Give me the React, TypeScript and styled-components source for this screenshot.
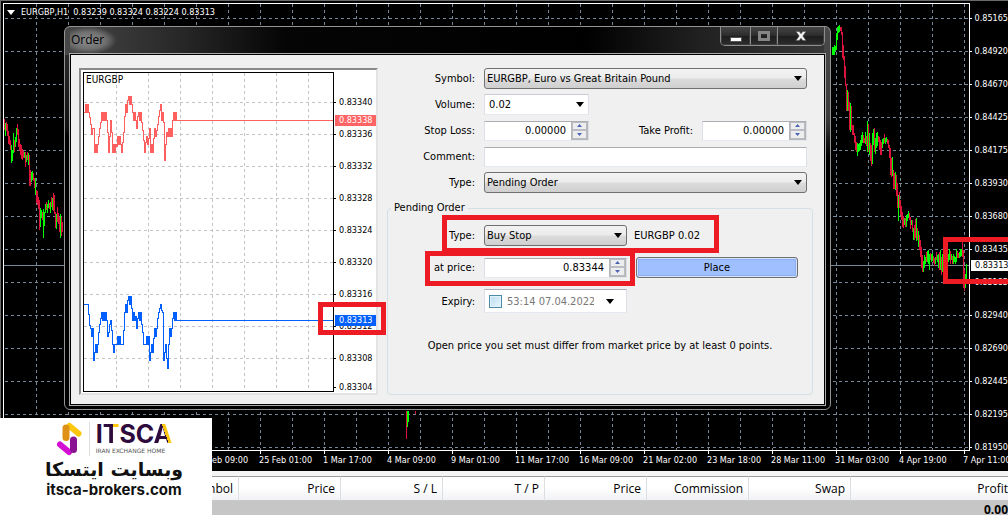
import React from "react";
import styled, { createGlobalStyle } from "styled-components";

const Global = createGlobalStyle`
  * { box-sizing: border-box; }
  html, body { margin: 0; padding: 0; background: #000; }
  body, input, select, button {
    font-family: "DejaVu Sans Condensed", "DejaVu Sans", sans-serif;
    font-stretch: condensed;
    font-size: 11px;
  }
`;

/* ---------- desktop and main chart ---------- */

const Desktop = styled.div`
  position: relative;
  display: flex;
  flex-direction: column;
  height: 100vh;
  overflow: hidden;
  background: #000;
`;

const ChartWindow = styled.section`
  flex: 1;
  min-height: 0;
  display: flex;
  flex-direction: column;
  padding: 2px 0 0 2px;
  border-top: 1px solid #6b6b6b;
  border-left: 1px solid #6b6b6b;
  color: #fff;
  font-size: 9px;
  line-height: 12px;
`;

const PlotRow = styled.div`
  flex: 1;
  min-height: 0;
  display: flex;
`;

const Plot = styled.div`
  flex: 1;
  min-width: 0;
  display: grid;
  border: 1px solid #fff;
  & > * { grid-area: 1 / 1; }
`;

const Drawing = styled.svg`
  display: block;
  width: 100%;
  height: 100%;
  min-height: 0;
`;

const Quote = styled.div`
  display: flex;
  align-items: center;
  gap: 6px;
  height: 16px;
  padding-left: 3px;
  white-space: pre;
  z-index: 1;
`;

const PriceAxis = styled.div`
  position: relative;
  width: 38px;
  display: flex;
  flex-direction: column;
  gap: 21px;
  padding-top: 9px;
`;

const Price = styled.span`
  display: flex;
  align-items: center;
  gap: 3px;
  height: 12px;
  white-space: nowrap;
  &::before { content: ""; width: 2px; height: 1px; background: #fff; }
`;

const CurrentPrice = styled.span`
  position: absolute;
  top: 257px;
  left: 1px;
  right: 0;
  height: 11px;
  padding-left: 4px;
  line-height: 11px;
  color: #000;
  background: #fff;
`;

const TimeAxis = styled.div`
  display: flex;
  height: 20px;
  padding-left: 192px;
  overflow: hidden;
`;

const Time = styled.span`
  flex: 0 0 64px;
  padding-top: 3px;
  white-space: nowrap;
  background: linear-gradient(#fff, #fff) 1px 0 / 1px 3px no-repeat;
`;

const Callout = styled.i<{ $box: string; $h?: number }>`
  position: absolute;
  inset: ${(p) => p.$box};
  height: ${(p) => (p.$h ? `${p.$h}px` : "auto")};
  border: 5px solid #ed1c24;
  pointer-events: none;
  z-index: 2;
`;

/* ---------- trade table ---------- */

const Terminal = styled.div`
  padding-top: 5px;
  background: #f4f4f4;
  height: 44px;
  overflow: hidden;
`;

const Trades = styled.table`
  width: 100%;
  table-layout: fixed;
  border-collapse: separate;
  border-spacing: 0;
  font-family: "Open Sans", "Noto Sans", sans-serif;
  font-stretch: normal;
  font-size: 12px;
  color: #000;
  th {
    height: 25px;
    padding: 0 5px 0 0;
    border-top: 1px solid #9a9a9a;
    border-right: 1px solid #dcdfe2;
    border-bottom: 1px solid #c8c8c8;
    background: linear-gradient(#fff 45%, #f1f2f4);
    font-weight: 400;
    text-align: right;
  }
  th:last-child { padding-right: 0; border-right: 0; }
  td {
    height: 18px;
    padding: 0;
    background: #c6c6c6;
    font-weight: 700;
    line-height: 18px;
    text-align: right;
  }
`;

const Col = styled.col<{ $w?: number }>`
  width: ${(p) => (p.$w ? `${p.$w}px` : "auto")};
`;

/* ---------- watermark ---------- */

const Brand = styled.aside`
  position: absolute;
  left: 0;
  bottom: 0;
  width: 212px;
  height: 97px;
  padding: 4px 0 0 16px;
  display: flex;
  flex-direction: column;
  align-items: center;
  background: #fff;
  color: #111;
  z-index: 3;
`;

const BrandTop = styled.div`
  display: flex;
  align-items: flex-start;
  gap: 6px;
`;

const BrandRule = styled.span`
  width: 1px;
  height: 34px;
  background: #ddd;
`;

const BrandName = styled.div`
  font-family: Inter, sans-serif;
  font-stretch: normal;
  font-size: 25px;
  font-weight: 700;
  line-height: 25px;
  color: #2e0b3c;
`;

const TwoTone = styled.span<{ $fill: string }>`
  background: ${(p) => p.$fill};
  background-clip: text;
  color: transparent;
`;

const BrandTag = styled.div`
  font-family: "DejaVu Sans", sans-serif;
  font-stretch: normal;
  font-size: 6px;
  line-height: 8px;
  color: #555;
`;

const BrandFa = styled.div`
  font-family: "DejaVu Sans", sans-serif;
  font-stretch: normal;
  font-size: 19px;
  font-weight: 700;
  line-height: 26px;
`;

const BrandUrl = styled.div`
  font-family: Inter, sans-serif;
  font-stretch: normal;
  font-size: 15px;
  font-weight: 700;
  line-height: 16px;
`;

/* ---------- order dialog ---------- */

const Dialog = styled.section`
  position: absolute;
  top: 26px;
  left: 64px;
  right: 177px;
  padding: 0 5px 4px;
  border: 1px solid #949494;
  border-radius: 6px;
  background:
    linear-gradient(#4a4a4a, #3c3c3c 90px, transparent 130px) right / 6px 100% no-repeat,
    linear-gradient(90deg, #474747, #262626 120px, #050505 220px, #000 520px, #222 640px, #383838) top / 100% 28px no-repeat,
    linear-gradient(#333, #111 100px, #000 110px);
  color: #000;
  z-index: 1;
`;

const TitleBar = styled.header`
  display: flex;
  justify-content: space-between;
  height: 27px;
`;

const Title = styled.h1`
  margin: 0;
  padding: 0 12px 0 1px;
  font-family: "Open Sans", "Noto Sans", sans-serif;
  font-stretch: normal;
  font-size: 12px;
  font-weight: 400;
  line-height: 26px;
  background: radial-gradient(ellipse at 40% 50%, #8d8d8d, #6f6f6f 45%, transparent 72%);
`;

const WindowButtons = styled.div`
  display: flex;
  height: 19px;
  border: 1px solid #8d8d8d;
  border-top: 0;
  border-radius: 0 0 5px 5px;
  overflow: hidden;
`;

const WindowButton = styled.button<{ $w: number }>`
  width: ${(p) => p.$w}px;
  padding: 0;
  display: flex;
  align-items: center;
  justify-content: center;
  border: 1px solid #3c3c3c;
  border-top: 0;
  background: linear-gradient(#454545, #2c2c2c 50%, #1c1c1c 52%, #2b2b2b);
  & + & { border-left: 1px solid #8d8d8d; }
`;

const Client = styled.div`
  display: flex;
  gap: 9px;
  padding: 13px 11px 9px 8px;
  border: 1px solid #000;
  outline: 1px solid #a9a9a9;
  background: #f0f0f0;
`;

const TickPanel = styled.div`
  flex: none;
  display: flex;
  padding: 2px 0 1px 2px;
  border: 2px solid;
  border-color: #8a8a8a #e3e3e3 #e3e3e3 #8a8a8a;
  background: #fff;
  font-size: 9px;
  line-height: 12px;
`;

const TickPlot = styled.div`
  display: grid;
  width: 251px;
  height: 320px;
  border: 1px solid #000;
  & > * { grid-area: 1 / 1; }
`;

const TickSymbol = styled.span`
  height: 13px;
  padding: 0 2px;
  font-size: 10px;
  line-height: 13px;
  z-index: 1;
`;

const TickAxis = styled.div`
  position: relative;
  display: flex;
  flex-direction: column;
  gap: 20px;
  width: 42px;
  height: 320px;
  padding-top: 24px;
`;

const TickPrice = styled.span`
  display: flex;
  flex: none;
  align-items: center;
  gap: 3px;
  height: 12px;
  &::before { content: ""; width: 2px; height: 1px; background: #000; }
  &:nth-child(10) { margin-top: -3px; }
`;

const TickTag = styled.span<{ $top: number; $color: string }>`
  position: absolute;
  top: ${(p) => p.$top}px;
  left: 1px;
  width: 41px;
  height: 11px;
  padding-left: 4px;
  line-height: 11px;
  color: #fff;
  background: ${(p) => p.$color};
`;

const Form = styled.form`
  flex: 1;
  min-width: 0;
  display: flex;
  flex-direction: column;
`;

const Rows = styled.div`
  display: flex;
  flex-direction: column;
  gap: 5px;
  padding-right: 6px;
`;

const Row = styled.div`
  position: relative;
  display: flex;
  align-items: center;
  min-height: 21px;
`;

const Label = styled.label`
  flex: 0 0 88px;
  margin-right: 9px;
  text-align: right;
  white-space: nowrap;
`;

const SideLabel = styled.label`
  margin: 0 9px 0 auto;
  white-space: nowrap;
`;

const Picker = styled.span<{ $w?: number; $plain?: boolean }>`
  position: relative;
  display: flex;
  flex: ${(p) => (p.$w ? `0 0 ${p.$w}px` : "1")};
  min-width: 0;
  height: 21px;
  border: 1px solid;
  border-color: ${(p) => (p.$plain ? "#c9ccd2 #dbdfe6 #e3e9ef #dbdfe6" : "#707070")};
  border-radius: ${(p) => (p.$plain ? "1px" : "3px")};
  background: ${(p) => (p.$plain ? "#fff" : "linear-gradient(#f3f3f3, #ebebeb 49%, #dcdcdc 51%, #cfcfcf)")};
  select {
    flex: 1;
    min-width: 0;
    appearance: none;
    border: 0;
    padding: 0 18px 0 ${(p) => (p.$plain ? "4px" : "2px")};
    background: transparent;
    color: #000;
  }
`;

const Arrow = styled.i`
  align-self: center;
  position: absolute;
  right: 4px;
  border: 4px solid transparent;
  border-top: 5px solid #000;
  border-bottom: 0;
  pointer-events: none;
`;

const Field = styled.span<{ $w?: number }>`
  display: flex;
  flex: ${(p) => (p.$w ? `0 0 ${p.$w}px` : "1")};
  min-width: 0;
  height: 20px;
  border: 1px solid;
  border-color: #abadb3 #dbdfe6 #e3e9ef #dbdfe6;
  border-radius: 1px;
  background: #fff;
  input {
    flex: 1;
    min-width: 0;
    border: 0;
    padding: 0 5px 0 4px;
    background: transparent;
    color: #000;
    text-align: right;
  }
`;

const Stepper = styled.span`
  display: flex;
  flex: 0 0 17px;
  flex-direction: column;
  border: 1px solid #b5b5b5;
  border-top: 0;
  background: #fff;
`;

const Step = styled.button`
  flex: 1;
  display: flex;
  align-items: center;
  justify-content: center;
  padding: 0;
  border: 1px solid #b9bcc4;
  background: #ededed;
`;

const Group = styled.fieldset`
  flex: 1;
  min-width: 0;
  margin: 8px 0 0;
  padding: 10px 0 0;
  border: 1px solid #d5dfe5;
  border-radius: 4px;
  legend {
    margin-left: 3px;
    padding: 0 3px;
    line-height: 14px;
  }
`;

const GroupRows = styled.div`
  display: flex;
  flex-direction: column;
  gap: 11px;
  margin-left: -1px;
`;

const Summary = styled.span`
  margin-left: 7px;
`;

const PlaceButton = styled.button`
  flex: 1;
  height: 21px;
  margin: 0 14px 0 9px;
  padding: 0;
  border: 1px solid #707070;
  border-radius: 3px;
  background: #a0bfff;
  box-shadow: inset 0 0 0 1px #d5e2ff, inset 0 0 0 2px #8caef2;
  color: #000;
`;

const DateField = styled(Field)`
  position: relative;
  align-items: center;
  height: 24px;
  padding-left: 4px;
  input[type="text"] {
    flex: 0 0 92px;
    padding: 0 0 0 5px;
    color: #787878;
    text-align: left;
  }
`;

const Check = styled.input`
  && {
    appearance: none;
    flex: 0 0 13px;
    height: 13px;
    margin: 0;
    padding: 0;
    border: 1px solid #4d8aa8;
    background: linear-gradient(135deg, #b9dcf2, #e9f6fd);
    box-shadow: inset 0 0 0 1px #e4f3fb;
  }
`;

const DateArrow = styled(Arrow)`
  right: 12px;
`;

const Note = styled.p`
  margin: 25px 0 0;
  line-height: 16px;
  text-align: center;
`;

/* ---------- data ---------- */

const prices = ["0.85165", "0.84920", "0.84670", "0.84425", "0.84175", "0.83930", "0.83680", "0.83435", "0.83185", "0.82940", "0.82690", "0.82445", "0.82195", "0.81950"];
const times = ["22 Feb 09:00", "25 Feb 01:00", "1 Mar 17:00", "4 Mar 09:00", "9 Mar 01:00", "11 Mar 17:00", "16 Mar 09:00", "21 Mar 02:00", "23 Mar 18:00", "28 Mar 11:00", "31 Mar 03:00", "4 Apr 19:00", "7 Apr 11:00"];
const tickPrices = ["0.83340", "0.83336", "0.83332", "0.83328", "0.83324", "0.83320", "0.83316", "0.83312", "0.83308", "0.83304"];

/* One bar per entry: direction, x, high, low. */
const bars = `r4 119 130,g5 123 136,r6 122 131,r7 124 136,r8 131 144,r9 136 145,r10 140 150,g11 145 163,g12 150 161,g13 133 153,r14 140 152,g15 137 147,g16 128 142,r17 124 135,r18 129 147,r19 139 151,r20 144 155,r21 145 159,r22 149 160,r23 151 158,g24 152 158,r25 152 167,g26 155 162,r27 152 160,g28 153 165,r29 155 186,r30 170 186,g31 172 182,g32 171 180,r33 173 181,r34 178 188,g35 178 195,r36 190 203,r37 191 205,r38 197 209,r39 200 230,g40 208 227,g41 210 218,r42 212 220,g43 209 238,g44 212 226,g45 204 213,r46 202 210,g47 204 213,g48 200 208,r49 203 209,g50 202 213,r51 197 207,g52 198 210,r53 193 211,r54 195 214,r55 212 228,g56 214 229,r57 207 222,r58 213 224,r59 217 232,g60 214 238,r61 217 236,r62 222 232,
g832 47 55,g833 47 55,g834 45 55,g835 46 51,g836 33 50,g837 27 40,g838 26 33,g839 25 32,r840 27 31,r841 27 35,r842 32 58,r843 45 60,r844 56 78,r845 66 86,r846 84 111,g847 90 111,r848 92 111,r849 102 130,g850 103 132,r851 106 130,r852 125 135,r853 125 135,r854 133 143,r855 136 150,r856 142 152,g857 143 156,g858 144 152,g859 143 151,g860 140 150,g861 135 146,g862 132 143,r863 135 143,r864 138 143,g865 132 144,r866 136 146,g867 121 152,r868 124 152,g869 133 155,r870 143 161,r871 145 166,g872 133 164,g873 129 145,r874 128 152,g875 138 154,g876 133 148,g877 132 146,r878 136 142,r879 137 150,r880 140 155,r881 142 155,g882 139 148,g883 138 144,r884 134 143,g885 138 144,g886 137 142,r887 139 144,r888 140 148,r889 145 158,r890 148 175,r891 158 177,g892 157 176,r893 170 189,r894 173 189,g895 172 190,r896 175 196,r897 183 208,g898 195 221,r899 192 208,r900 200 215,r901 206 220,r902 212 227,r903 216 228,g904 218 225,r905 218 227,g906 215 227,g907 214 221,g908 211 218,r909 213 220,r910 217 229,g911 220 225,r912 220 232,g913 228 240,r914 225 240,r915 219 238,g916 218 241,r917 228 240,g918 231 247,r919 235 250,r920 240 257,r921 247 268,r922 255 272,g923 261 272,g924 255 268,g925 257 264,r926 252 262,g927 251 262,g928 250 264,g929 254 270,r930 253 260,g931 254 262,g932 253 261,r933 256 263,r934 258 266,g935 257 264,r936 252 260,g937 255 262,g938 254 268,r939 252 270,g940 250 270,r941 257 275,g942 254 272,g943 250 268,r944 251 262,g945 252 264,g946 255 262,r947 252 260,g948 254 262,g949 249 260,r950 251 264,g951 254 260,r952 256 264,g953 254 264,g954 256 262,g955 257 264,g956 249 262,r957 251 258,r958 253 258,g959 252 258,g960 249 257,g961 249 256,r962 241 257,r963 250 288,r964 270 291,g965 274 288,g966 264 280,
r406 411 439,g407 411 427,g408 411 422,r415 411 414`
  .split(",")
  .map((s) => {
    const t = s.trim();
    const [x, y1, y2] = t.slice(1).split(" ").map(Number);
    return { up: t[0] === "g", x, y1, y2 };
  });

const ask = "84,112 85,104 86,112 87,104 88,112 89,117 90,124 91,134 92,128 93,128 94,140 94,152 95,144 96,152 97,144 98,136 99,128 100,122 101,112 102,120 103,112 104,120 105,112 106,120 107,132 108,152 109,136 110,120 111,132 112,152 113,144 114,152 115,144 116,146 117,136 118,144 119,136 120,144 121,152 122,142 123,132 124,116 125,104 126,112 127,100 128,96 129,104 130,96 131,104 132,112 133,120 134,112 135,120 136,128 137,116 138,112 139,120 140,112 141,122 142,130 143,140 144,152 145,142 146,136 147,144 148,138 149,128 150,152 151,144 152,152 153,138 154,128 155,136 156,130 157,124 158,116 159,110 160,104 161,120 162,112 163,122 164,160 165,144 166,132 167,136 168,128 169,136 170,128 171,136 172,120 173,112 174,120 175,112 176,120";
const bid = "84,304 87,304 88,314 89,325 90,328 91,336 92,328 93,360 94,352 95,344 96,352 97,344 98,332 99,324 100,318 101,312 102,320 103,312 104,320 105,312 106,320 107,336 108,332 109,324 110,320 111,330 112,344 113,352 114,344 116,344 117,336 118,344 119,336 120,344 122,344 123,330 124,312 125,304 126,312 127,300 128,296 129,304 130,296 131,308 132,320 133,312 134,320 135,316 136,328 137,318 138,312 139,320 140,312 141,324 142,332 143,344 145,344 146,336 147,344 148,336 149,360 150,352 151,344 152,352 153,338 154,328 155,336 156,328 157,318 158,312 159,308 160,304 161,310 162,312 163,360 164,352 165,344 166,358 167,368 168,344 169,328 170,336 171,328 172,318 173,312 174,320 175,312 176,320";

/* Turns a list of points into a stepped path of one-pixel moves. */
const stepped = (points: string) =>
  points
    .split(" ")
    .map((p, i) => {
      const [x, y] = p.split(",").map(Number);
      return i === 0 ? `M${x} ${y + 0.5}` : `H${x + 0.5}V${y + 0.5}`;
    })
    .join("");

const range = (from: number, step: number, count: number) => Array.from({ length: count }, (_, i) => from + i * step);

/* ---------- parts ---------- */

function MainPlot() {
  return (
    <Drawing shapeRendering="crispEdges" aria-hidden="true">
      <g transform="translate(-4 -4)">
        <g stroke="#778899" strokeDasharray="3 3">
          {range(36, 32, 80).map((x) => (
            <line key={x} x1={x + 0.5} x2={x + 0.5} y1="4" y2="2000" />
          ))}
          {range(18, 33, 40).map((y) => (
            <line key={y} y1={y + 0.5} y2={y + 0.5} x1="5" x2="3000" />
          ))}
        </g>
        <line x1="4" x2="3000" y1="265.5" y2="265.5" stroke="#778899" />
        {bars.map((b, i) => (
          <rect key={i} x={b.x} y={b.y1} width="1" height={b.y2 - b.y1} fill={b.up ? "#00ff00" : "#dc143c"} />
        ))}
      </g>
    </Drawing>
  );
}

function TickLines() {
  return (
    <Drawing shapeRendering="crispEdges" aria-hidden="true">
      <g transform="translate(-84 -73)" fill="none">
        <g stroke="#c4c4c4" strokeDasharray="3 3">
          {range(116, 32, 7).map((x) => (
            <line key={x} x1={x + 0.5} x2={x + 0.5} y1="73" y2="392" />
          ))}
          {range(102, 32, 9).map((y) => (
            <line key={y} y1={y + 0.5} y2={y + 0.5} x1="84" x2="334" />
          ))}
        </g>
        <path d={stepped(ask)} stroke="#ff5f5f" />
        <path d={stepped(bid)} stroke="#0060ff" />
        <rect x="176" y="120" width="158" height="1" fill="#ff5f5f" />
        <rect x="176" y="320" width="158" height="1" fill="#0060ff" />
      </g>
    </Drawing>
  );
}

function Spinner({ id, value, width }: { id: string; value: string; width: number }) {
  return (
    <Field $w={width}>
      <input id={id} defaultValue={value} />
      <Stepper>
        <Step type="button" aria-label="Increase">
          <svg width="5" height="3"><path d="M0 3 2.5 0 5 3z" fill="#4a62b5" /></svg>
        </Step>
        <Step type="button" aria-label="Decrease">
          <svg width="5" height="3"><path d="M0 0 2.5 3 5 0z" fill="#4a62b5" /></svg>
        </Step>
      </Stepper>
    </Field>
  );
}

function Dropdown({ id, value, width, plain }: { id: string; value: string; width?: number; plain?: boolean }) {
  return (
    <Picker $w={width} $plain={plain}>
      <select id={id}><option>{value}</option></select>
      <Arrow />
    </Picker>
  );
}

function OrderDialog() {
  return (
    <Dialog role="dialog" aria-label="Order">
      <TitleBar>
        <Title>Order</Title>
        <WindowButtons>
          <WindowButton $w={29} type="button" aria-label="Minimize">
            <svg width="12" height="12"><rect x=".5" y="7.5" width="11" height="4" fill="#fff" stroke="#555" /></svg>
          </WindowButton>
          <WindowButton $w={27} type="button" aria-label="Maximize" disabled>
            <svg width="12" height="10"><rect x="1.5" y="1.5" width="9" height="7" fill="none" stroke="#858585" strokeWidth="3" /><rect x="4" y="4" width="4" height="2" fill="#222" /></svg>
          </WindowButton>
          <WindowButton $w={47} type="button" aria-label="Close">
            <svg width="12" height="10" viewBox="0 0 12 10"><path d="M1 .5h3.2L6 2.8 7.8.5H11L7.8 5 11 9.5H7.8L6 7.2 4.2 9.5H1L4.2 5z" fill="#f4f4f4" stroke="#555" strokeWidth=".6" /></svg>
          </WindowButton>
        </WindowButtons>
      </TitleBar>
      <Client>
        <TickPanel>
          <TickPlot>
            <TickSymbol>EURGBP</TickSymbol>
            <TickLines />
          </TickPlot>
          <TickAxis>
            {tickPrices.map((p) => <TickPrice key={p}>{p}</TickPrice>)}
            <TickTag $top={43} $color="#ff6464">0.83338</TickTag>
            <TickTag $top={243} $color="#0060ff">0.83313</TickTag>
            <Callout $box="230px -10px auto -16px" $h={33} />
          </TickAxis>
        </TickPanel>
        <Form>
          <Rows>
            <Row><Label htmlFor="symbol">Symbol:</Label><Dropdown id="symbol" value="EURGBP, Euro vs Great Britain Pound" /></Row>
            <Row><Label htmlFor="volume">Volume:</Label><Dropdown id="volume" value="0.02" width={105} plain /></Row>
            <Row>
              <Label htmlFor="sl">Stop Loss:</Label>
              <Spinner id="sl" value="0.00000" width={105} />
              <SideLabel htmlFor="tp">Take Profit:</SideLabel>
              <Spinner id="tp" value="0.00000" width={105} />
            </Row>
            <Row><Label htmlFor="comment">Comment:</Label><Field><input id="comment" /></Field></Row>
            <Row><Label htmlFor="type">Type:</Label><Dropdown id="type" value="Pending Order" /></Row>
          </Rows>
          <Group>
            <legend>Pending Order</legend>
            <GroupRows>
              <Row>
                <Label htmlFor="pending">Type:</Label>
                <Dropdown id="pending" value="Buy Stop" width={143} />
                <Summary>EURGBP 0.02</Summary>
                <Callout $box="-10px 93px -7px 55px" />
              </Row>
              <Row>
                <Label htmlFor="price">at price:</Label>
                <Spinner id="price" value="0.83344" width={143} />
                <PlaceButton type="button">Place</PlaceButton>
                <Callout $box="-6px 177px -8px 38px" />
              </Row>
              <Row>
                <Label htmlFor="expiry">Expiry:</Label>
                <DateField $w={143}>
                  <Check type="checkbox" aria-label="Use expiry" />
                  <input id="expiry" type="text" defaultValue="53:14 07.04.2022" />
                  <DateArrow />
                </DateField>
              </Row>
            </GroupRows>
            <Note>Open price you set must differ from market price by at least 0 points.</Note>
          </Group>
        </Form>
      </Client>
    </Dialog>
  );
}

function BrandMark() {
  return (
    <svg width="27" height="34" viewBox="0 0 27 34" fill="none" strokeLinecap="round">
      <path d="M13.5 4 22.5 11.500" stroke="#fdc70c" strokeWidth="6" />
      <path d="M10 6v9.500" stroke="#df9016" strokeWidth="7" />
      <path d="M4 22.500 13 30" stroke="#d20fd2" strokeWidth="6" />
      <path d="M17.500 18v9.500" stroke="#8a1391" strokeWidth="7" />
    </svg>
  );
}

export default function App() {
  return (
    <Desktop>
      <Global />
      <ChartWindow>
        <PlotRow>
          <Plot>
            <Quote>
              <svg width="8" height="5"><path d="M0 0h8L4 5z" fill="#fff" /></svg>
              {"EURGBP,H1  0.83239 0.83324 0.83224 0.83313"}
            </Quote>
            <MainPlot />
          </Plot>
          <PriceAxis>
            {prices.map((p) => <Price key={p}>{p}</Price>)}
            <CurrentPrice>0.83313</CurrentPrice>
            <Callout $box="234px -5px auto -27px" $h={47} />
          </PriceAxis>
        </PlotRow>
        <TimeAxis>{times.map((t) => <Time key={t}>{t}</Time>)}</TimeAxis>
      </ChartWindow>
      <Terminal>
        <Trades>
          <colgroup>
            <Col $w={239} /><Col $w={102} /><Col $w={102} /><Col $w={102} /><Col $w={102} /><Col $w={102} /><Col $w={102} /><Col />
          </colgroup>
          <thead>
            <tr>
              <th>Symbol</th><th>Price</th><th>S / L</th><th>T / P</th><th>Price</th><th>Commission</th><th>Swap</th><th>Profit</th>
            </tr>
          </thead>
          <tbody>
            <tr><td colSpan={7} /><td>0.00</td></tr>
          </tbody>
        </Trades>
      </Terminal>
      <OrderDialog />
      <Brand>
        <BrandTop>
          <BrandMark />
          <BrandRule />
          <div>
            <BrandName>
              I
              <TwoTone $fill="linear-gradient(90deg, #2e0b3c 62%, #fdc70c 62%)">T</TwoTone>
              SC
              <TwoTone $fill="linear-gradient(70deg, #2e0b3c 58%, #fdc70c 58%)">A</TwoTone>
            </BrandName>
            <BrandTag>IRAN EXCHANGE HOME</BrandTag>
          </div>
        </BrandTop>
        <BrandFa lang="fa" dir="rtl">وبسایت ایتسکا</BrandFa>
        <BrandUrl>itsca-brokers.com</BrandUrl>
      </Brand>
    </Desktop>
  );
}
